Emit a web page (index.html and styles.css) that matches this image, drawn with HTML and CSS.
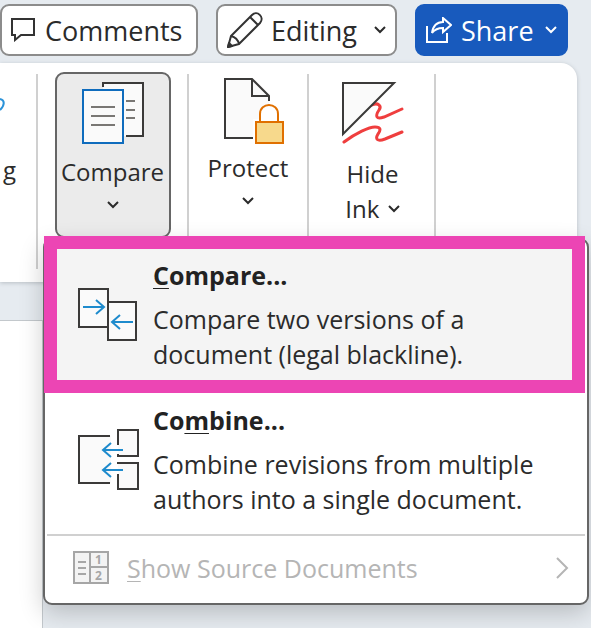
FILE: index.html
```html
<!DOCTYPE html>
<html lang="en">
<head>
    <meta charset="utf-8">
    <title>Compare</title>
    <link rel="stylesheet" href="styles.css">
</head>

<body>
    <div class="topbar">
        <button type="button" class="top-btn comments">
            <svg width="24" height="24" viewBox="0 0 24 24" fill="none" stroke="#333" stroke-width="2">
                <path d="M1 1H23V17H10L4 22V17H1Z"/>
            </svg>
            Comments
        </button>
        <button type="button" class="top-btn editing">
            <svg width="36" height="36" viewBox="0 0 36 36" fill="none" stroke="#333" stroke-width="2" stroke-linejoin="round">
                <path d="M1 35L4 24L25 3C30 -2 38 5 33 11L12 32ZM4 24C8 25 11 28 12 32M23 5L31 13"/>
                <path d="M1 35L2 31L5 34Z" fill="#333"/>
            </svg>
            Editing
            <svg class="chevron" width="12" height="8" viewBox="0 0 12 8"><path d="M1 1L6 6L11 1"/></svg>
        </button>
        <button type="button" class="top-btn share">
            <svg width="26" height="26" viewBox="0 0 26 26" fill="none" stroke="#fff" stroke-width="2">
                <path d="M1 9V25H21V16"/>
                <path d="M6 16C7 9 11 5 17 5V1L25 8L17 15V11C12 11 9 12 6 16Z"/>
            </svg>
            Share
            <svg class="chevron" width="12" height="8" viewBox="0 0 12 8"><path d="M1 1L6 6L11 1"/></svg>
        </button>
    </div>

    <div class="ribbon">
        <div class="group first">
            <svg width="6" height="18" viewBox="0 0 6 18" fill="none" stroke="#2b93d9" stroke-width="2">
                <path d="M0 3C5 4 5 9 0 14"/>
            </svg>
            <span>g</span>
        </div>
        <div class="group compare">
            <button type="button" class="ribbon-btn active">
                <svg width="62" height="62" viewBox="0 0 62 62" fill="#fafafa" stroke-width="2">
                    <path d="M21 1H61V54H21Z" stroke="none"/>
                    <path d="M21 5V1H61V54H44" fill="none" stroke="#3b3a39"/>
                    <path d="M44 19H53M44 28H53M44 36H53" stroke="#797774"/>
                    <path d="M1 8H41V61H1Z" stroke="#0f6cbd"/>
                    <path d="M9 25H33M9 34H33M9 43H33" stroke="#797774"/>
                </svg>
                <span>Compare</span>
                <svg class="chevron" width="12" height="8" viewBox="0 0 12 8"><path d="M1 1L6 6L11 1"/></svg>
            </button>
        </div>
        <div class="group protect">
            <button type="button" class="ribbon-btn">
                <svg width="72" height="66" viewBox="-12 0 72 66" fill="#fafafa" stroke="#3b3a39" stroke-width="2">
                    <path d="M1 1H28L45 18V60H1Z" stroke="none"/>
                    <path d="M29 60H1V1H28L45 18V23M28 1V18H45" fill="none"/>
                    <path d="M29 41H35V34C36 24 56 24 56 34V41H60V66H29Z" fill="#fff" stroke="none"/>
                    <path d="M36 44V36C36 24 54 24 54 36V44" fill="#fff" stroke="#e07000"/>
                    <path d="M32 44H59V65H32Z" fill="#f7d98c" stroke="#e07000"/>
                </svg>
                <span>Protect</span>
                <svg class="chevron" width="12" height="8" viewBox="0 0 12 8"><path d="M1 1L6 6L11 1"/></svg>
            </button>
        </div>
        <div class="group ink">
            <button type="button" class="ribbon-btn">
                <svg width="62" height="62" viewBox="0 0 62 62" fill="none" stroke="#ef3e3e" stroke-width="3" stroke-linecap="round">
                    <path d="M30 23C36 20 40 24 37 28C33 34 34 38 42 35L60 27"/>
                    <path d="M2 60C14 51 27 45 33 45C39 45 39 48 36 52C33 57 35 60 43 57L60 50"/>
                    <path d="M1 1H52L1 52Z" fill="#fafafa" stroke="#3b3a39" stroke-width="2"/>
                </svg>
                <span>Hide<br>Ink <svg class="chevron" width="12" height="8" viewBox="0 0 12 8"><path d="M1 1L6 6L11 1"/></svg></span>
            </button>
        </div>
    </div>

    <div class="document"></div>

    <div class="menu">
        <button type="button" class="menu-item selected">
            <svg width="60" height="54" viewBox="0 0 60 54" fill="#fafafa" stroke="#3b3a39" stroke-width="2">
                <path d="M1 1H30V39H1ZM30 14H58V52H30Z"/>
                <path d="M5 19H26M18 12L26 19L18 26M55 34H34M42 27L34 34L42 41" fill="none" stroke="#1e8bcd"/>
            </svg>
            <span>
                <strong><u>C</u>ompare...</strong>
                <span class="desc">Compare two versions of a<br>document (legal blackline).</span>
            </span>
        </button>
        <button type="button" class="menu-item">
            <svg width="62" height="62" viewBox="0 0 62 62" fill="#fafafa" stroke="#3b3a39" stroke-width="2">
                <path d="M1 7H33V54H1ZM40 1H60V27H40ZM40 34H60V60H40Z" stroke="none"/>
                <path d="M32 7H1V54H32M40 16V1H60V27H40V25M40 35V34H60V60H40V45" fill="none"/>
                <path d="M45 21H25M33 14L25 21L33 28M45 41H25M33 34L25 41L33 48" fill="none" stroke="#1e8bcd"/>
            </svg>
            <span>
                <strong>Co<u>m</u>bine...</strong>
                <span class="desc">Combine revisions from multiple<br>authors into a single document.</span>
            </span>
        </button>
        <hr>
        <button type="button" class="menu-item sources" disabled>
            <svg width="36" height="34" viewBox="0 0 36 34" fill="#f3f3f3" stroke="#a6a6a6" stroke-width="2">
                <path d="M1 1H35V32H1ZM17 1V32M17 16H35M5 11H13M5 17H13M5 23H13"/>
                <g class="digits"><text x="22" y="13">1</text><text x="22" y="29">2</text></g>
            </svg>
            <span><u>S</u>how Source Documents</span>
            <svg class="arrow" width="14" height="22" viewBox="0 0 14 22" fill="none" stroke="#b5b5b5" stroke-width="2"><path d="M2 1L12 11L2 21"/></svg>
        </button>
    </div>
</body>
</html>
```
FILE: styles.css
```css
* {
    box-sizing: border-box;
}

body {
    margin: 0;
    min-height: 100vh;
    position: relative;
    display: flex;
    flex-direction: column;
    overflow: hidden;
    background-color: #e6ebf0;
    color: #2b2b2b;
    font-family: "Open Sans", "Noto Sans", sans-serif;
    font-size: 24px;
}

button {
    font: inherit;
    color: inherit;
    cursor: pointer;
}

svg {
    flex: none;
}

.chevron {
    fill: none;
    stroke: currentColor;
    stroke-width: 2;
}

.topbar {
    display: flex;
    gap: 18px;
    padding: 4px 23px 7px 0;
}

.top-btn {
    display: flex;
    align-items: center;
    height: 52px;
    padding: 0 9px;
    border: 2px solid #8c8c8c;
    border-radius: 9px;
    background-color: white;
    font-size: 27px;
    white-space: nowrap;
}

.comments {
    width: 198px;
    gap: 10px;
}

.editing {
    width: 181px;
    gap: 8px;
}

.share {
    width: 153px;
    gap: 9px;
    border-color: #185abd;
    background-color: #185abd;
    color: white;
}

.top-btn .chevron {
    margin-left: auto;
}

.ribbon {
    display: flex;
    height: 219px;
    margin-right: 14px;
    padding: 9px 0 13px;
    border-radius: 0 16px 16px 0;
    background-color: white;
    box-shadow: 0 1px 4px #b8bec4;
}

.group {
    display: flex;
    justify-content: center;
    border-right: 2px solid #d0d0d0;
    margin-top: 2px;
}

.first {
    flex-direction: column;
    justify-content: flex-start;
    width: 38px;
    padding-top: 22px;
}

.first span {
    margin: 38px 0 0 3px;
    line-height: 35px;
}

.compare {
    width: 151px;
}

.protect {
    width: 120px;
}

.ink {
    width: 127px;
}

.ribbon-btn {
    display: flex;
    flex-direction: column;
    align-items: center;
    width: 116px;
    height: 166px;
    padding: 2px 0;
    border: 2px solid transparent;
    border-radius: 9px;
    background-color: transparent;
    line-height: 35px;
}

.ribbon-btn.active {
    margin-top: -2px;
    padding-top: 8px;
    border-color: #666;
    background-color: #ebebeb;
}

.ribbon-btn span {
    margin: 10px 0 12px;
}

.protect .ribbon-btn span {
    margin-top: 6px;
}

.ink .ribbon-btn {
    padding: 6px 0 0 2px;
}

.ink .ribbon-btn span {
    margin-top: 12px;
}

.ink .chevron {
    margin-left: 2px;
    vertical-align: 5px;
}

.document {
    flex: 1;
    width: 43px;
    margin-top: 38px;
    border: 1px solid #c3c8cc;
    border-left: 0;
    border-bottom: 0;
    background-color: white;
}

.menu {
    position: absolute;
    top: 238px;
    left: 43px;
    right: 2px;
    padding: 5px 2px 0;
    border: 2px solid #666;
    border-radius: 9px;
    background-color: white;
    box-shadow: 0 8px 24px rgba(0, 0, 0, 0.2);
    font-size: 25px;
}

.menu-item {
    position: relative;
    display: grid;
    grid-template-columns: 75px 1fr;
    align-items: center;
    width: 100%;
    height: 145px;
    padding: 0 31px 5px;
    border: 0;
    background-color: transparent;
    text-align: left;
    line-height: 35px;
    white-space: nowrap;
}

.menu-item.selected {
    width: 534px;
    background-color: #f4f4f4;
}

/* thick frame round the chosen command */
.menu-item.selected::after {
    content: "";
    position: absolute;
    inset: -9px -4px -3px -3px;
    border: 13px solid #ec45b4;
}

.menu-item strong {
    display: block;
    margin-bottom: 9px;
    color: #222;
}

.desc {
    display: block;
}

u {
    text-decoration-thickness: 1px;
    text-underline-offset: 3px;
}

hr {
    height: 2px;
    margin: -1px 0 0;
    border: 0;
    background-color: #d0d0d0;
}

.menu-item.sources {
    grid-template-columns: 54px 1fr auto;
    height: 67px;
    padding: 0 16px 3px 26px;
    color: #b5b5b5;
}

.digits {
    fill: #a6a6a6;
    stroke: none;
    font-size: 12px;
    font-weight: bold;
}
```
